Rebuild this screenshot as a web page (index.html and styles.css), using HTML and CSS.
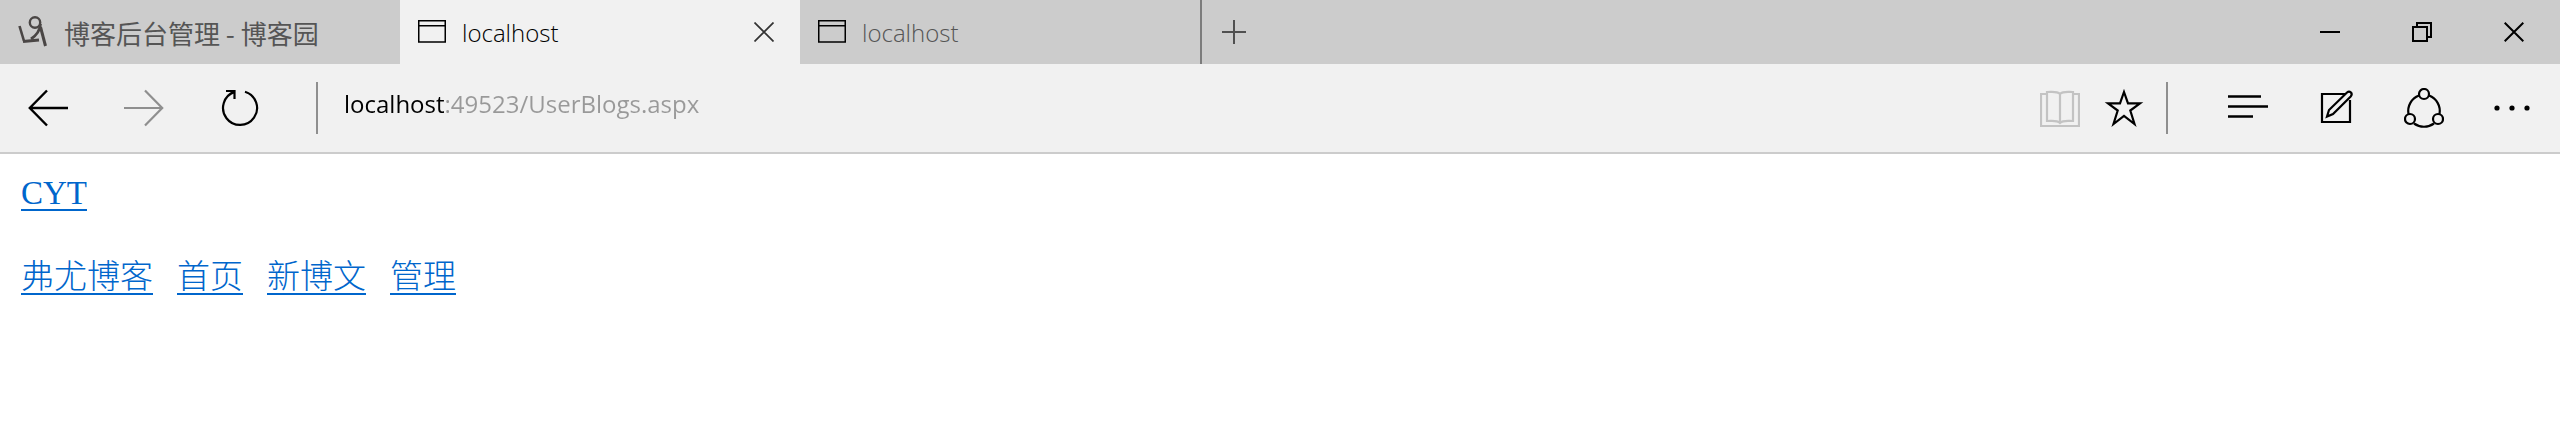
FILE: index.html
```
<!DOCTYPE html>
<html lang="zh-CN">

<head>
    <meta charset="utf-8">
    <meta name="viewport" content="width=device-width, initial-scale=1.0">
    <title>localhost</title>
    <link rel="stylesheet" href="styles.css">
</head>

<body>

    <header class="tabbar">
        <div class="tab">
            <button class="tab-title">
                <svg width="30" height="32" viewBox="0 0 30 32" fill="none" stroke="#4a4645">
                    <circle cx="17" cy="6.5" r="5.2" stroke-width="2.4" />
                    <path d="M22.500 8C22 14 19 19 13 23" stroke-width="2.8" />
                    <path d="M22.500 11L27.500 30" stroke-width="3" />
                    <path d="M1.500 10L6 25" stroke-width="2.6" />
                    <path d="M5 25.500L21 24" stroke-width="3" />
                </svg>
                <span class="cjk">博客后台管理 - 博客园</span>
            </button>
        </div>
        <div class="tab valgt">
            <button class="tab-title">
                <svg width="28" height="24" viewBox="0 0 28 24" fill="none" stroke="#000" stroke-width="1.5">
                    <path d="M.75 .75H27.25V22H.75ZM.75 5.75H27.25" />
                </svg>
                <span>localhost</span>
            </button>
            <button class="tab-close" aria-label="关闭标签页">
                <svg width="20" height="20" viewBox="0 0 20 20" stroke="#333" stroke-width="1.7">
                    <path d="M.5 .5L19.5 19.5M19.5 .5L.5 19.5" />
                </svg>
            </button>
        </div>
        <div class="tab">
            <button class="tab-title">
                <svg width="28" height="24" viewBox="0 0 28 24" fill="none" stroke="#000" stroke-width="1.5">
                    <path d="M.75 .75H27.25V22H.75ZM.75 5.75H27.25" />
                </svg>
                <span>localhost</span>
            </button>
        </div>
        <button class="new-tab" aria-label="新建标签页">
            <svg width="24" height="24" viewBox="0 0 24 24" stroke="#505050" stroke-width="2">
                <path d="M0 12H24M12 0V24" />
            </svg>
        </button>

        <div class="window-buttons">
            <button aria-label="最小化">
                <svg width="20" height="20" viewBox="0 0 20 20" stroke="#000" stroke-width="2">
                    <path d="M0 10H20" />
                </svg>
            </button>
            <button aria-label="还原">
                <svg width="20" height="20" viewBox="0 0 20 20" fill="none" stroke="#000" stroke-width="2">
                    <path d="M1 5H15V19H1ZM5 5V1H19V15H15" />
                </svg>
            </button>
            <button aria-label="关闭">
                <svg width="20" height="20" viewBox="0 0 20 20" stroke="#000" stroke-width="2">
                    <path d="M.7 .7L19.3 19.3M19.3 .7L.7 19.3" />
                </svg>
            </button>
        </div>
    </header>

    <nav class="toolbar">
        <button class="nav-button" aria-label="后退">
            <svg width="40" height="40" viewBox="0 0 40 40" fill="none" stroke="#000" stroke-width="2.4">
                <path d="M40 20H2M19 2.5L1.8 20L19 37.5" />
            </svg>
        </button>
        <button class="nav-button" aria-label="前进" disabled>
            <svg width="40" height="40" viewBox="0 0 40 40" fill="none" stroke="#8f8f8f" stroke-width="2.2">
                <path d="M0 20H38M21 2.5L38.2 20L21 37.5" />
            </svg>
        </button>
        <button class="nav-button" aria-label="刷新">
            <svg width="40" height="40" viewBox="0 0 40 40" fill="none" stroke="#000" stroke-width="2.2">
                <path d="M25 3.7A17 17 0 1 1 14.5 3.9M6 3H14.5V11" />
            </svg>
        </button>
        <span class="divider"></span>

        <input class="address" type="text" aria-label="地址" value="localhost:49523/UserBlogs.aspx" spellcheck="false">

        <button class="page-button" aria-label="阅读视图" disabled>
            <svg width="40" height="40" viewBox="0 0 40 40" fill="none" stroke="#c3c3c3" stroke-width="2.2">
                <path d="M20 6C17 3 13 4 7 4V33C13 33 17 32 20 35C23 32 27 33 33 33V4C27 4 23 3 20 6V35" />
                <path d="M7 6H1V38H39V6H33" />
            </svg>
        </button>
        <button class="page-button" aria-label="收藏">
            <svg width="40" height="40" viewBox="0 0 40 40" fill="none" stroke="#000" stroke-width="2.2">
                <path d="M20 4L24 15.3H36L26.3 22.5L30.5 36L20 28L9.5 36L13.7 22.5L4 15.3H16Z" />
            </svg>
        </button>
        <span class="divider"></span>

        <div class="tools">
            <button class="tool-button" aria-label="中心">
                <svg width="40" height="40" viewBox="0 0 40 40" stroke="#000" stroke-width="2.4">
                    <path d="M0 8.5H33M0 18.5H40M0 28.5H25" />
                </svg>
            </button>
            <button class="tool-button" aria-label="做笔记">
                <svg width="40" height="40" viewBox="0 0 40 40" fill="none" stroke="#000" stroke-width="2.2">
                    <path d="M30 6H6V34H34V12" />
                    <path d="M31 4.5Q33 2.8 35 4.5Q36.5 6.5 34.7 8.5L17 26L11 28.5L13 22Z" />
                </svg>
            </button>
            <button class="tool-button" aria-label="共享">
                <svg width="40" height="40" viewBox="0 0 40 40" fill="none" stroke="#000" stroke-width="2.2">
                    <circle cx="20" cy="6" r="5" />
                    <circle cx="6" cy="31" r="5" />
                    <circle cx="34" cy="31" r="5" />
                    <path d="M15 7.5A16.5 16.5 0 0 0 4.5 26M25 7.5A16.5 16.5 0 0 1 35.5 26M10 35.5A17 17 0 0 0 30 35.5" />
                </svg>
            </button>
            <button class="tool-button" aria-label="更多">
                <svg width="40" height="40" viewBox="0 0 40 40" fill="#000">
                    <circle cx="5" cy="20" r="2.6" />
                    <circle cx="20" cy="20" r="2.6" />
                    <circle cx="35" cy="20" r="2.6" />
                </svg>
            </button>
        </div>
    </nav>

    <main class="content">
        <a class="user" href="#">CYT</a>
        <div class="links">
            <a href="#">弗尤博客</a>
            <a href="#">首页</a>
            <a href="#">新博文</a>
            <a href="#">管理</a>
        </div>
    </main>

</body>

</html>
```
FILE: styles.css
```
* {
    box-sizing: border-box;
}

body {
    margin: 0;
    background-color: #fff;
    font-family: 'Open Sans', 'Noto Sans CJK SC', sans-serif;
}

button {
    display: flex;
    align-items: center;
    justify-content: center;
    flex-shrink: 0;
    padding: 0;
    border: none;
    background: none;
    font-family: inherit;
}

svg {
    flex-shrink: 0;
}

/* tabs */

.tabbar {
    display: flex;
    height: 64px;
    background-color: #ccc;
}

.tab {
    display: flex;
    flex: 0 1 400px;
    min-width: 0;
}

.tab-title {
    flex: 1;
    justify-content: flex-start;
    gap: 16px;
    min-width: 0;
    padding-left: 18px;
    color: #555;
    font-size: 24px;
    font-weight: 300;
    white-space: nowrap;
}

.cjk {
    font-family: 'Noto Sans CJK SC', sans-serif;
    font-size: 26px;
    font-weight: 400;
}

.tab-close {
    width: 72px;
}

.valgt {
    background-color: #f1f1f1;
}

.valgt .tab-title {
    color: #000;
}

.new-tab {
    width: 66px;
    border-left: 2px solid #7c7c7c;
}

.window-buttons {
    display: flex;
    margin-left: auto;
}

.window-buttons button {
    width: 92px;
}

/* address bar */

.toolbar {
    display: flex;
    align-items: center;
    height: 90px;
    background-color: #f1f1f1;
    border-bottom: 2px solid #ccc;
}

.nav-button {
    width: 96px;
}

.divider {
    width: 2px;
    height: 52px;
    margin-left: 28px;
    background-color: #8f8f8f;
}

.page-button {
    width: 64px;
}

.page-button + .divider {
    margin-left: 10px;
}

.address {
    flex: 1;
    min-width: 0;
    margin-left: 26px;
    padding: 0 0 10px;
    border: none;
    outline: none;
    font-family: 'Open Sans', sans-serif;
    font-size: 24px;
    /* host is black, the rest of the address grey */
    background: linear-gradient(to right, #000 100px, #999 100px);
    -webkit-background-clip: text;
    background-clip: text;
    color: transparent;
}

.tools {
    display: flex;
    padding: 0 4px 0 36px;
}

.tool-button {
    width: 88px;
}

/* page */

.content {
    padding: 19px 21px;
    font-family: 'Liberation Serif', 'Noto Sans CJK SC', serif;
    font-size: 33px;
    font-weight: 300;
    line-height: 40px;
}

.content a {
    color: #06c;
    text-decoration-thickness: 2px;
    text-underline-offset: 5px;
}

.links {
    display: flex;
    gap: 24px;
    margin-top: 44px;
}
```
